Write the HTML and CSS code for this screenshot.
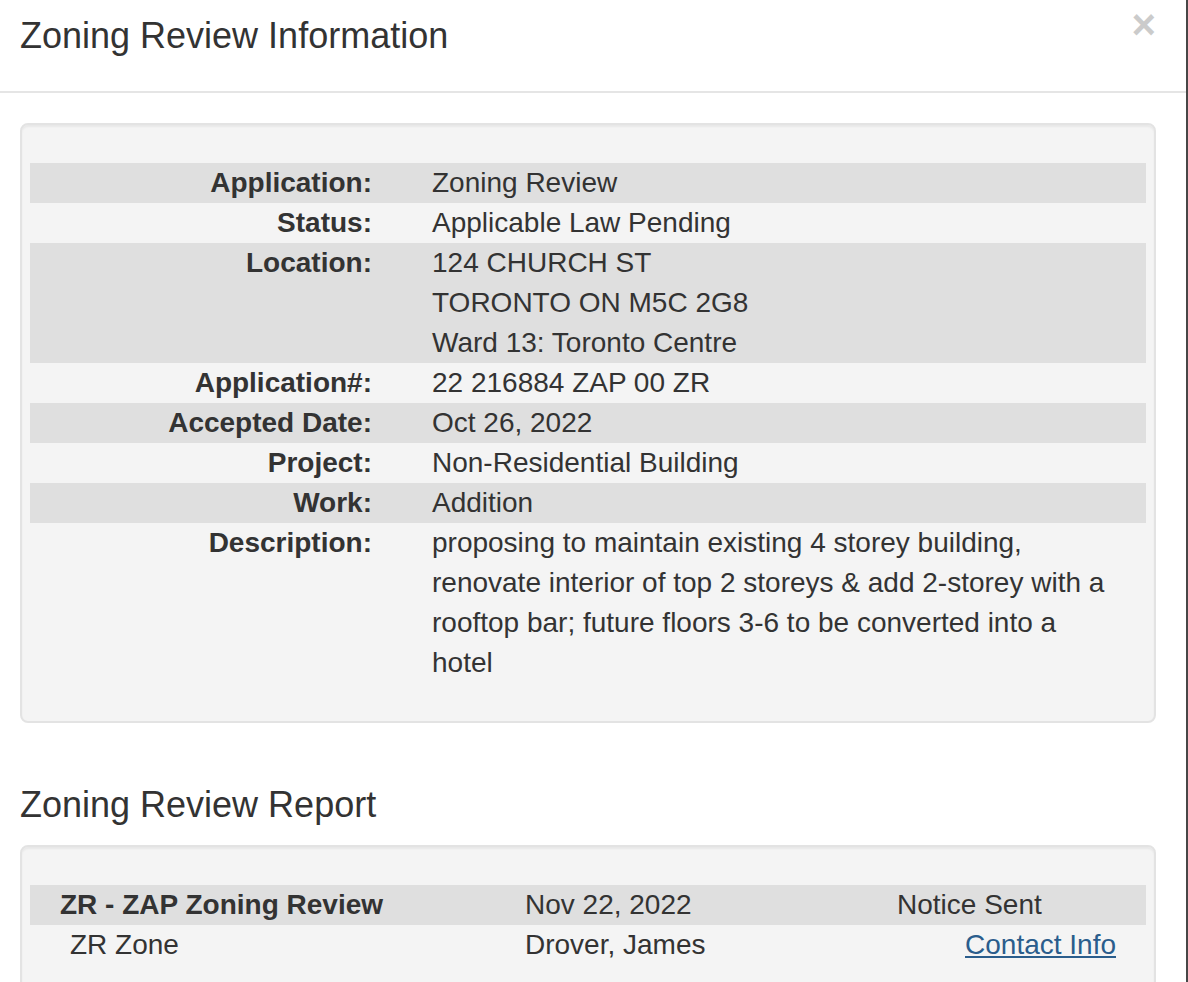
FILE: index.html
```html
<!DOCTYPE html>
<html lang="en">
<head>
<meta charset="utf-8">
<title>Zoning Review Information</title>
<link rel="stylesheet" href="styles.css">
</head>
<body>
<div class="modal">
  <div class="modal-header">
    <h4 class="modal-title">Zoning Review Information</h4>
    <button class="close" type="button" aria-label="Close">×</button>
  </div>
  <div class="modal-body">
    <div class="well">
      <div class="info">
        <div class="row striped"><div class="label">Application:</div><div class="value">Zoning Review</div></div>
        <div class="row"><div class="label">Status:</div><div class="value">Applicable Law Pending</div></div>
        <div class="row striped"><div class="label">Location:</div><div class="value">124 CHURCH ST<br>TORONTO ON M5C 2G8<br>Ward 13: Toronto Centre</div></div>
        <div class="row"><div class="label">Application#:</div><div class="value">22 216884 ZAP 00 ZR</div></div>
        <div class="row striped"><div class="label">Accepted Date:</div><div class="value">Oct 26, 2022</div></div>
        <div class="row"><div class="label">Project:</div><div class="value">Non-Residential Building</div></div>
        <div class="row striped"><div class="label">Work:</div><div class="value">Addition</div></div>
        <div class="row"><div class="label">Description:</div><div class="value">proposing to maintain existing 4 storey building, renovate interior of top 2 storeys &amp; add 2-storey with a rooftop bar; future floors 3-6 to be converted into a hotel</div></div>
      </div>
    </div>

    <h4 class="section-title">Zoning Review Report</h4>
    <div class="well report">
      <div class="report-row striped">
        <div class="col c5 strong">ZR - ZAP Zoning Review</div>
        <div class="col c4">Nov 22, 2022</div>
        <div class="col c3">Notice Sent</div>
      </div>
      <div class="report-row">
        <div class="col c5 indent">ZR Zone</div>
        <div class="col c4">Drover, James</div>
        <div class="col c3 right"><a href="#" class="link">Contact Info</a></div>
      </div>
    </div>
  </div>
</div>
</body>
</html>
```

FILE: styles.css
```css
html, body {
  margin: 0;
  padding: 0;
  background: #fff;
  overflow: hidden;
}

body {
  font-family: "Liberation Sans", Arial, Helvetica, sans-serif;
  font-size: 28px;
  line-height: 40px;
  color: #333;
  width: 1188px;
  height: 982px;
}

.modal {
  margin-top: -20px;
  margin-left: -10px;
  width: 1196px;
  border-right: 2px solid #474747;
  background: #fff;
  min-height: 1100px;
}

.modal-header {
  display: flex;
  justify-content: space-between;
  align-items: flex-start;
  padding: 30px;
  border-bottom: 2px solid #e5e5e5;
}

.modal-title {
  margin: 0;
  font-size: 36px;
  font-weight: 400;
  line-height: 51.4px;
  color: #333;
}

.close {
  margin-top: -6px;
  padding: 0;
  border: 0;
  background: transparent;
  font-family: "Liberation Sans", Arial, sans-serif;
  font-size: 42px;
  font-weight: 700;
  line-height: 1;
  color: #000;
  opacity: 0.2;
  cursor: pointer;
}

.modal-body {
  padding: 30px;
}

.well {
  background: #f4f4f4;
  border: 2px solid #e3e3e3;
  border-radius: 8px;
  box-shadow: inset 0 2px 2px rgba(0, 0, 0, 0.05);
  padding: 38px 8px;
  margin-bottom: 40px;
}

.info .row {
  display: grid;
  grid-template-columns: 342px 1fr;
  column-gap: 60px;
}

.striped {
  background: #dfdfdf;
}

.label {
  text-align: right;
  font-weight: 700;
}

.value {
  padding-right: 30px;
}

.section-title {
  margin: 62px 0 20px;
  font-size: 36px;
  font-weight: 400;
  line-height: 39.6px;
  color: #333;
}

.report-row {
  display: grid;
  grid-template-columns: 5fr 4fr 3fr;
}

.col {
  padding: 0 30px;
}

.strong {
  font-weight: 700;
}

.indent {
  padding-left: 40px;
}

.right {
  text-align: right;
}

.link {
  color: #2a5d8c;
  text-decoration: underline;
}
```
